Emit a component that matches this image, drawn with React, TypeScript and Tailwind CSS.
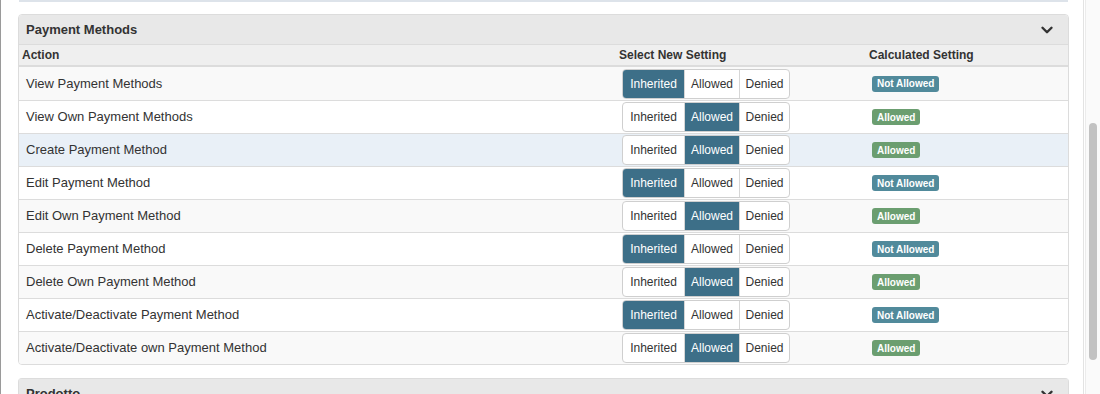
import { ChevronDown } from 'lucide-react';

type Setting = 'Inherited' | 'Allowed' | 'Denied';

const ROWS: { action: string; setting: Setting; calc: 'Allowed' | 'Not Allowed' }[] = [
  { action: 'View Payment Methods', setting: 'Inherited', calc: 'Not Allowed' },
  { action: 'View Own Payment Methods', setting: 'Allowed', calc: 'Allowed' },
  { action: 'Create Payment Method', setting: 'Allowed', calc: 'Allowed' },
  { action: 'Edit Payment Method', setting: 'Inherited', calc: 'Not Allowed' },
  { action: 'Edit Own Payment Method', setting: 'Allowed', calc: 'Allowed' },
  { action: 'Delete Payment Method', setting: 'Inherited', calc: 'Not Allowed' },
  { action: 'Delete Own Payment Method', setting: 'Allowed', calc: 'Allowed' },
  { action: 'Activate/Deactivate Payment Method', setting: 'Inherited', calc: 'Not Allowed' },
  { action: 'Activate/Deactivate own Payment Method', setting: 'Allowed', calc: 'Allowed' },
];

const OPTIONS: { label: Setting; width: string }[] = [
  { label: 'Inherited', width: 'w-[61px]' },
  { label: 'Allowed', width: 'w-[55px]' },
  { label: 'Denied', width: 'w-[50px]' },
];

function SettingGroup({ value }: { value: Setting }) {
  return (
    <div className="inline-flex h-[30px] rounded-[4px] border border-[#cfcfcf] bg-white overflow-hidden">
      {OPTIONS.map((o, i) => (
        <div
          key={o.label}
          className={`${o.width} flex items-center justify-center text-[12px] ${
            i > 0 ? 'border-l border-[#d6d6d6]' : ''
          } ${value === o.label ? 'bg-[#3d6f88] text-white border-[#3d6f88]' : 'text-[#333]'}`}
        >
          {o.label}
        </div>
      ))}
    </div>
  );
}

function Badge({ calc }: { calc: 'Allowed' | 'Not Allowed' }) {
  const allowed = calc === 'Allowed';
  return (
    <span
      className={`inline-flex h-[16px] items-center rounded-[3px] px-[5px] text-[10px] font-bold text-white ${
        allowed ? 'bg-[#6b9e70]' : 'bg-[#518a9b]'
      }`}
    >
      {calc}
    </span>
  );
}

export default function App() {
  return (
    <div
      className="flex w-[1100px] h-[394px] overflow-hidden bg-white text-[#333]"
      style={{ fontFamily: '"Liberation Sans", Arial, sans-serif' }}
    >
      {/* Content */}
      <div className="flex-1 border-l border-[#9a9a9a] pl-[17px] pr-[14px]">
        {/* end of previous panel */}
        <div className="h-[2px] mx-[1px] border-b-2 border-[#dde3ea]" />

        {/* Payment Methods panel */}
        <div className="mt-[12px] rounded-[4px] border border-[#dcdcdc] overflow-hidden">
          <div className="flex h-[30px] items-center justify-between bg-[#e8e8e8] border-b border-[#dcdcdc] pl-[7px] pr-[12px]">
            <span className="text-[13px] font-bold text-[#333]">Payment Methods</span>
            <ChevronDown size={18} strokeWidth={3.2} className="text-[#333]" />
          </div>

          <div className="grid grid-cols-[597px_250px_1fr] h-[22px] items-center bg-[#efefef] border-b-2 border-[#dcdcdc] text-[12px] font-bold">
            <div className="pl-[3px]">Action</div>
            <div className="pl-[3px]">Select New Setting</div>
            <div className="pl-[3px]">Calculated Setting</div>
          </div>

          {ROWS.map((r, i) => (
            <div
              key={r.action}
              className={`grid grid-cols-[597px_250px_1fr] h-[33px] items-center ${
                i > 0 ? 'border-t border-[#dcdcdc]' : ''
              } ${i === 2 ? 'bg-[#e9f0f7]' : i % 2 === 0 ? 'bg-[#f9f9f9]' : 'bg-white'}`}
            >
              <div className="pl-[7px] text-[13px]">{r.action}</div>
              <div className="pl-[6px] flex items-center">
                <SettingGroup value={r.setting} />
              </div>
              <div className="pl-[6px] flex items-center">
                <Badge calc={r.calc} />
              </div>
            </div>
          ))}
        </div>

        {/* Prodotto panel */}
        <div className="mt-[13px] rounded-t-[4px] border border-[#dcdcdc] border-b-0">
          <div className="flex h-[30px] items-center justify-between bg-[#e8e8e8] pl-[7px] pr-[12px]">
            <span className="text-[13px] font-bold text-[#333]">Prodotto</span>
            <ChevronDown size={18} strokeWidth={3.2} className="text-[#333]" />
          </div>
        </div>
      </div>

      {/* Scrollbar */}
      <div className="flex w-[17px] border-l border-[#e3e3e3]">
        <div className="w-[2px] bg-white border-r border-[#ececec]" />
        <div className="flex-1 bg-[#fafafa] pl-[3px] pr-[3px] pt-[123px]">
          <div className="h-[237px] w-[8px] rounded-full bg-[#c2c2c2]" />
        </div>
      </div>
    </div>
  );
}
